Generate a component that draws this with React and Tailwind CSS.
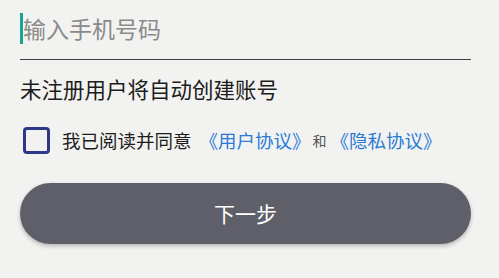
import { useState } from 'react'

export default function App() {
  const [phone, setPhone] = useState('')
  const [agreed, setAgreed] = useState(false)

  return (
    <div
      className="h-[278px] w-[499px] bg-[#f2f2f0] px-[20px] pt-[13px]"
      style={{ fontFamily: '"Noto Sans CJK SC", "Noto Sans", sans-serif' }}
    >
      <div className="flex w-[451px] items-start border-b border-[#3f3f3f] pb-[15px]">
        <div className="h-[31px] w-[3px] shrink-0 bg-[#1aa394]" />
        <input
          value={phone}
          onChange={(e) => setPhone(e.target.value)}
          placeholder="输入手机号码"
          className="w-full bg-transparent pl-0 text-[23px] leading-[31px] text-[#333] outline-none placeholder:text-[#8a8a8a]"
        />
      </div>

      <p className="mt-[14px] text-[21.5px] leading-[30px] text-[#1c1c1c]">
        未注册用户将自动创建账号
      </p>

      <div className="mt-[23px] flex h-[27px] items-center">
        <button
          onClick={() => setAgreed(!agreed)}
          className="ml-[3px] h-[27px] w-[27px] shrink-0 rounded-[4px] border-[3px] border-[#2e3888]"
        />
        <span className="ml-[12px] text-[18.5px] text-[#1c1c1c]">我已阅读并同意</span>
        <span className="ml-[8px] text-[18.5px] text-[#2a7ad6]">《用户协议》</span>
        <span className="ml-[2px] text-[14px] text-[#555]">和</span>
        <span className="ml-[4px] text-[18.5px] text-[#2a7ad6]">《隐私协议》</span>
      </div>

      <button className="mt-[29px] flex h-[61px] w-[451px] items-center justify-center rounded-full bg-[#5f5f69] text-[21px] text-white shadow-[0_2px_4px_rgba(0,0,0,0.25)]">
        下一步
      </button>
    </div>
  )
}
